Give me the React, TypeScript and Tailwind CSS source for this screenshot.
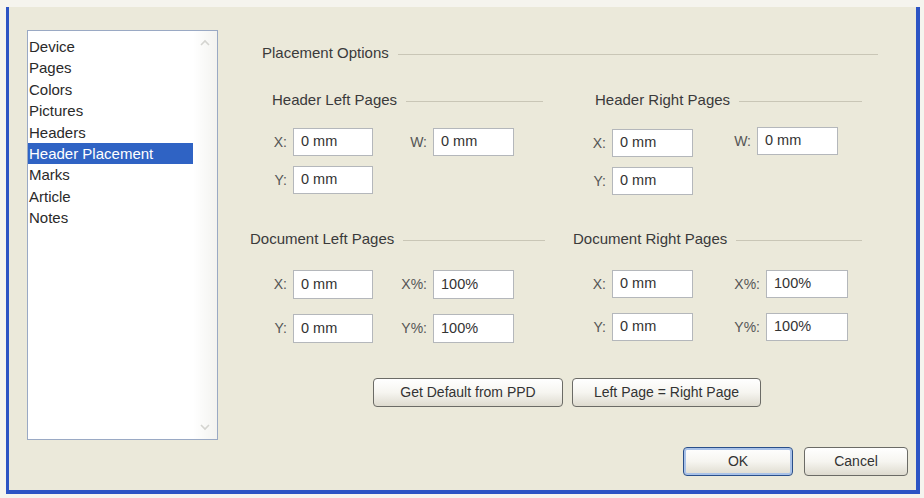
import React from 'react';

const font = { fontFamily: '"Liberation Sans", Arial, sans-serif' };

const items = ['Device', 'Pages', 'Colors', 'Pictures', 'Headers', 'Header Placement', 'Marks', 'Article', 'Notes'];

const Field = ({ value, w = 'w-[80px]', h = 'h-[28px]' }: { value: string; w?: string; h?: string }) => (
  <div className={`${w} ${h} shrink-0 bg-white border border-[#b4b7bb] flex items-center pl-[7px] text-[14.5px] text-[#333]`}>
    {value}
  </div>
);

const Label = ({ text, w }: { text: string; w: string }) => (
  <div className={`${w} shrink-0 text-right pr-[6px] text-[14px] text-[#555]`}>{text}</div>
);

const Title = ({ text, pl, mr }: { text: string; pl: string; mr: string }) => (
  <div className={`flex items-center h-[16px] ${pl} ${mr}`}>
    <span className="text-[15px] text-[#3a3a3a] whitespace-nowrap">{text}</span>
    <div className="flex-1 h-px bg-[#c9c6b6] ml-[9px] mt-[2px]" />
  </div>
);

const XpButton = ({ text, w, primary }: { text: string; w: string; primary?: boolean }) => (
  <button
    className={`${w} h-[29px] shrink-0 rounded-[4px] border ${primary ? 'border-[#2a4f8a] shadow-[inset_0_0_0_2px_#a9c2e8]' : 'border-[#6b6b66]'} bg-gradient-to-b from-white via-[#f6f5f0] to-[#dedbcf] text-[14px] text-[#333]`}
  >
    {text}
  </button>
);

export default function App() {
  return (
    <div className="w-[924px] h-[498px] bg-[#f5f4ee] pt-[7px] pl-[6px] pr-[4px] overflow-hidden" style={font}>
      <div className="h-[487px] bg-[#ebe9da] border-l-[3px] border-r-[4px] border-b-[4px] border-[#2c54c4] flex">
        {/* list box */}
        <div className="ml-[18px] mt-[23px] w-[191px] h-[410px] shrink-0 bg-white border border-[#9aa9c4] flex">
          <div className="flex-1 pt-[5px]">
            {items.map((it) => (
              <div
                key={it}
                className={`h-[21.4px] leading-[21px] pl-[1px] text-[15px] ${it === 'Header Placement' ? 'bg-[#2f63c4] text-white' : 'text-[#2a2a2a]'}`}
              >
                {it}
              </div>
            ))}
          </div>
          <div className="w-[24px] bg-gradient-to-r from-white to-[#f3f3f0] flex flex-col justify-between items-center py-[8px]">
            <svg width="12" height="8" viewBox="0 0 12 8"><path d="M2 6 L6 2 L10 6" fill="none" stroke="#d4d4d0" strokeWidth="1.6" /></svg>
            <svg width="12" height="8" viewBox="0 0 12 8"><path d="M2 2 L6 6 L10 2" fill="none" stroke="#d4d4d0" strokeWidth="1.6" /></svg>
          </div>
        </div>

        {/* right panel */}
        <div className="ml-[32px] flex-1 flex flex-col">
          <div className="mt-[38px] mr-[38px]">
            <Title text="Placement Options" pl="pl-[12px]" mr="" />
          </div>

          <div className="flex mt-[31px]">
            {/* header left */}
            <div className="w-[323px] flex flex-col">
              <Title text="Header Left Pages" pl="pl-[22px]" mr="mr-[30px]" />
              <div className="flex items-center mt-[20px]">
                <Label text="X:" w="w-[43px]" />
                <Field value="0 mm" />
                <Label text="W:" w="w-[60px]" />
                <Field value="0 mm" w="w-[81px]" />
              </div>
              <div className="flex items-center mt-[10px]">
                <Label text="Y:" w="w-[43px]" />
                <Field value="0 mm" />
              </div>
            </div>
            {/* header right */}
            <div className="flex-1 flex flex-col">
              <Title text="Header Right Pages" pl="pl-[22px]" mr="mr-[54px]" />
              <div className="flex items-start mt-[19px]">
                <Label text="X:" w="w-[39px] mt-[6px]" />
                <div className="mt-[2px]"><Field value="0 mm" w="w-[81px]" /></div>
                <Label text="W:" w="w-[64px] mt-[4px]" />
                <Field value="0 mm" w="w-[81px]" />
              </div>
              <div className="flex items-center mt-[10px]">
                <Label text="Y:" w="w-[39px]" />
                <Field value="0 mm" w="w-[81px]" />
              </div>
            </div>
          </div>

          <div className="flex mt-[36px]">
            {/* document left */}
            <div className="w-[323px] flex flex-col">
              <Title text="Document Left Pages" pl="" mr="mr-[28px]" />
              <div className="flex items-center mt-[23px]">
                <Label text="X:" w="w-[43px]" />
                <Field value="0 mm" h="h-[29px]" />
                <Label text="X%:" w="w-[60px]" />
                <Field value="100%" w="w-[81px]" h="h-[29px]" />
              </div>
              <div className="flex items-center mt-[15px]">
                <Label text="Y:" w="w-[43px]" />
                <Field value="0 mm" h="h-[29px]" />
                <Label text="Y%:" w="w-[60px]" />
                <Field value="100%" w="w-[81px]" h="h-[29px]" />
              </div>
            </div>
            {/* document right */}
            <div className="flex-1 flex flex-col">
              <Title text="Document Right Pages" pl="" mr="mr-[54px]" />
              <div className="flex items-center mt-[23px]">
                <Label text="X:" w="w-[39px]" />
                <Field value="0 mm" w="w-[81px]" />
                <Label text="X%:" w="w-[73px]" />
                <Field value="100%" w="w-[82px]" />
              </div>
              <div className="flex items-center mt-[15px]">
                <Label text="Y:" w="w-[39px]" />
                <Field value="0 mm" w="w-[81px]" />
                <Label text="Y%:" w="w-[73px]" />
                <Field value="100%" w="w-[82px]" />
              </div>
            </div>
          </div>

          <div className="flex gap-[9px] mt-[35px] ml-[123px]">
            <XpButton text="Get Default from PPD" w="w-[190px]" />
            <XpButton text="Left Page = Right Page" w="w-[189px]" />
          </div>

          <div className="flex justify-end gap-[11px] mt-[40px] mr-[8px]">
            <XpButton text="OK" w="w-[110px]" primary />
            <XpButton text="Cancel" w="w-[104px]" />
          </div>
        </div>
      </div>
    </div>
  );
}
